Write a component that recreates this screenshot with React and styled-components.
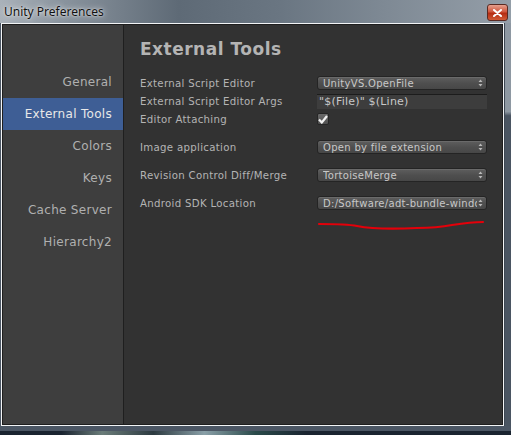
import React from "react";
import styled, { createGlobalStyle } from "styled-components";

const Global = createGlobalStyle`
  html, body { margin: 0; padding: 0; background: #1c2530; }
  body { width: 511px; height: 435px; overflow: hidden; }
`;

const sections = ["General", "External Tools", "Colors", "Keys", "Cache Server", "Hierarchy2"];

const rows = [
  { label: "External Script Editor", kind: "popup", value: "UnityVS.OpenFile" },
  { label: "External Script Editor Args", kind: "text", value: "\"$(File)\" $(Line)" },
  { label: "Editor Attaching", kind: "check" },
  { label: "Image application", kind: "popup", value: "Open by file extension", gap: true },
  { label: "Revision Control Diff/Merge", kind: "popup", value: "TortoiseMerge", gap: true },
  { label: "Android SDK Location", kind: "popup", value: "D:/Software/adt-bundle-windows-x86", gap: true },
];

export default function App() {
  return (
    <>
      <Global />
      <Window>
        <TitleBar>
          <Title>Unity Preferences</Title>
          <CloseButton>
            <svg width="9" height="8" viewBox="0 0 9 8">
              <path d="M1 1 L8 7 M8 1 L1 7" stroke="#fff" strokeWidth="2" strokeLinecap="round" />
            </svg>
          </CloseButton>
        </TitleBar>
        <FrameRow>
          <Client>
            <Sidebar>
              {sections.map((s) => (
                <SideItem key={s} active={s === "External Tools"}>{s}</SideItem>
              ))}
            </Sidebar>
            <Content>
              <Heading>External Tools</Heading>
              {rows.map((r) => (
                <Row key={r.label} gap={r.gap}>
                  <Label>{r.label}</Label>
                  {r.kind === "popup" && (
                    <Popup>
                      <PopupText>{r.value}</PopupText>
                      <Arrows>
                        <svg width="5" height="8" viewBox="0 0 5 8">
                          <path d="M0.5 3 L2.5 0.5 L4.5 3 Z M0.5 5 L2.5 7.5 L4.5 5 Z" fill="#b8b8b8" />
                        </svg>
                      </Arrows>
                    </Popup>
                  )}
                  {r.kind === "text" && <TextField>{r.value}</TextField>}
                  {r.kind === "check" && (
                    <Check>
                      <svg width="10" height="9" viewBox="0 0 10 9">
                        <path d="M1 4.5 L3.8 7.5 L9 1" stroke="#f2f2f2" strokeWidth="2.2" fill="none" />
                      </svg>
                    </Check>
                  )}
                </Row>
              ))}
              <Scribble viewBox="0 0 170 12" width="170" height="12">
                <path
                  d="M2 4 C20 4 30 4 40 6 C55 9 80 9 100 8 C118 8 125 7 135 5 C148 3 158 2 166 2"
                  stroke="#e4000a"
                  strokeWidth="2.2"
                  fill="none"
                  strokeLinecap="round"
                />
              </Scribble>
            </Content>
          </Client>
          <RightEdge />
        </FrameRow>
        <BottomFrame />
        <Desktop />
      </Window>
    </>
  );
}

const Window = styled.div`
  width: 511px;
  height: 435px;
  display: flex;
  flex-direction: column;
  background: #4b5664;
`;

const TitleBar = styled.div`
  height: 23px;
  display: flex;
  align-items: center;
  justify-content: space-between;
  padding: 0 3px 0 4px;
  background: linear-gradient(90deg, #aab2ba 0%, #8a949e 12%, #5e6a76 35%, #6a7682 55%, #7e8994 75%, #949ea8 100%);
`;

const Title = styled.span`
  font-family: "Noto Sans", "DejaVu Sans", sans-serif;
  font-size: 12px;
  color: #111;
  text-shadow: 0 0 6px rgba(255, 255, 255, 0.9), 0 0 2px rgba(255, 255, 255, 0.8);
  margin-top: -1px;
`;

const CloseButton = styled.div`
  width: 21px;
  height: 17px;
  margin-top: 2px;
  border: 1px solid #5a2a22;
  border-radius: 3px;
  box-sizing: border-box;
  display: flex;
  align-items: center;
  justify-content: center;
  background: linear-gradient(180deg, #e6a08e 0%, #d0573d 45%, #b52c12 55%, #d15a35 100%);
`;

const FrameRow = styled.div`
  flex: 1;
  display: flex;
  padding-left: 1px;
`;

const Client = styled.div`
  flex: 1;
  display: flex;
  border: 1px solid #f2f4f6;
  box-shadow: inset 0 0 0 1px #1e1e1e;
  padding: 1px;
`;

const RightEdge = styled.div`
  width: 6px;
  background: linear-gradient(180deg, #8e98a2 0%, #8e98a2 22%, #4a5562 23%, #4a5562 100%);
  border-left: 1px solid #3d4753;
`;

const BottomFrame = styled.div`
  height: 5px;
  background: #4b5664;
`;

const Desktop = styled.div`
  height: 4px;
  background: linear-gradient(90deg, #1a2430 0%, #1a2430 12%, #6b7d7a 20%, #2c3a40 30%, #8aa0a8 40%, #2a4a4a 50%, #1a2430 60%, #1a2430 100%);
`;

const Sidebar = styled.div`
  width: 120px;
  background: #3e3e3e;
  border-right: 1px solid #1f1f1f;
  display: flex;
  flex-direction: column;
  padding-top: 41px;
`;

const SideItem = styled.div`
  height: 32px;
  display: flex;
  align-items: center;
  justify-content: flex-end;
  padding-right: 11px;
  font-family: "DejaVu Sans", sans-serif;
  font-size: 12px;
  letter-spacing: 0.3px;
  color: ${(p) => (p.active ? "#e8e8e8" : "#b0b0b0")};
  background: ${(p) => (p.active ? "#3e5e95" : "transparent")};
`;

const Content = styled.div`
  flex: 1;
  background: #323232;
  padding: 11px 15px 0 15px;
  display: flex;
  flex-direction: column;
`;

const Heading = styled.div`
  font-family: "DejaVu Sans", sans-serif;
  font-weight: bold;
  font-size: 17px;
  letter-spacing: 0.5px;
  color: #b4b4b4;
  height: 26px;
  line-height: 26px;
  margin-bottom: 12px;
  padding-left: 1px;
`;

const Row = styled.div`
  display: flex;
  align-items: center;
  height: 18px;
  margin-top: ${(p) => (p.gap ? "10px" : "0")};
`;

const Label = styled.div`
  width: 178px;
  font-family: "DejaVu Sans", sans-serif;
  font-size: 10.2px;
  letter-spacing: 0.3px;
  color: #b4b4b4;
  white-space: nowrap;
  padding-left: 1px;
  box-sizing: border-box;
`;

const Popup = styled.div`
  width: 170px;
  height: 14px;
  box-sizing: border-box;
  border: 1px solid #242424;
  border-radius: 3px;
  background: linear-gradient(180deg, #5e5e5e 0%, #4f4f4f 50%, #474747 100%);
  box-shadow: inset 0 1px 0 #6a6a6a;
  display: flex;
  align-items: center;
  padding: 0 3px 0 5px;
  overflow: hidden;
`;

const PopupText = styled.span`
  flex: 1;
  font-family: "DejaVu Sans", sans-serif;
  font-size: 10px;
  letter-spacing: 0.3px;
  color: #c8c8c8;
  white-space: nowrap;
  overflow: hidden;
`;

const Arrows = styled.span`
  display: flex;
  align-items: center;
  margin-left: 1px;
`;

const TextField = styled.div`
  width: 170px;
  height: 15px;
  box-sizing: border-box;
  background: #3d3d3d;
  border-top: 1px solid #1c1c1c;
  padding-left: 2px;
  font-family: "DejaVu Sans", sans-serif;
  font-size: 11px;
  line-height: 14px;
  color: #c8c8c8;
  letter-spacing: 0.2px;
`;

const Check = styled.div`
  width: 12px;
  height: 12px;
  box-sizing: border-box;
  border: 1px solid #262626;
  border-radius: 2px;
  background: linear-gradient(180deg, #6a6a6a 0%, #505050 100%);
  display: flex;
  align-items: center;
  justify-content: center;
`;

const Scribble = styled.svg`
  margin: 8px 0 0 178px;
`;
